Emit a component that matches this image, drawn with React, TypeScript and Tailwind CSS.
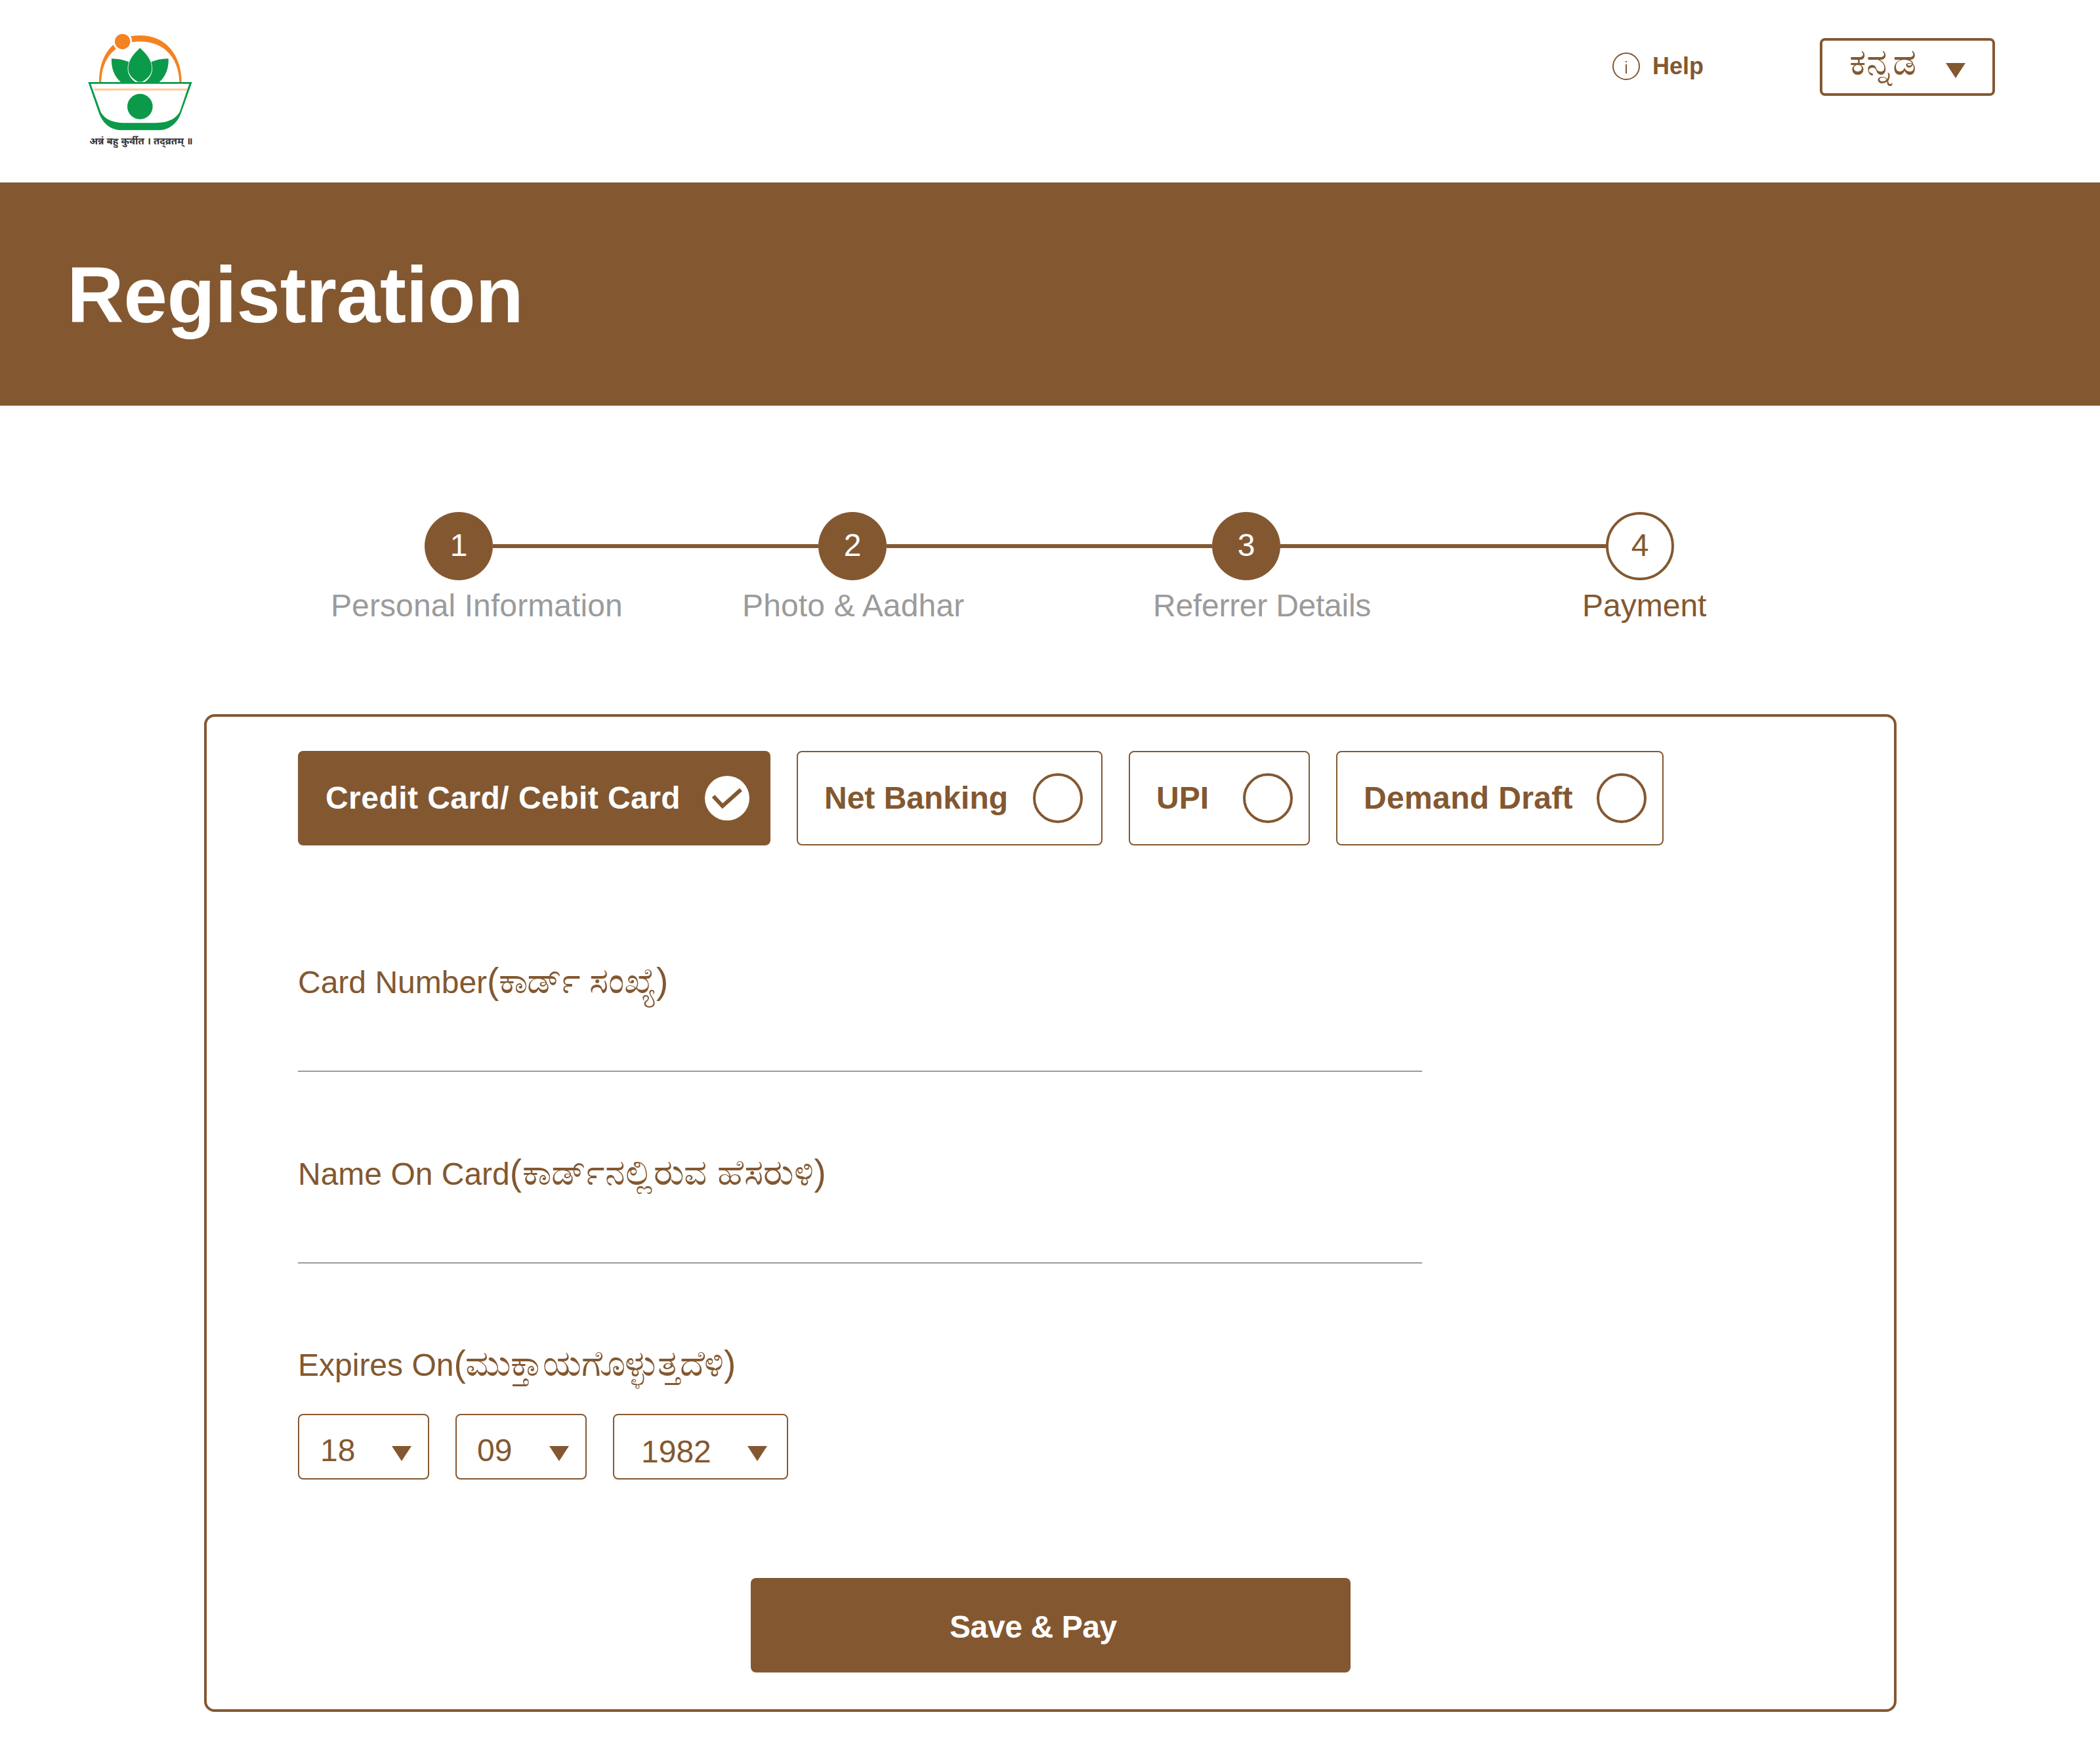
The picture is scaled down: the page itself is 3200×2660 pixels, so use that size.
import React from 'react';

const Caret: React.FC<{ className?: string }> = ({ className = '' }) => (
  <svg className={className} width="30" height="23" viewBox="0 0 30 23">
    <path d="M0 0h30L15 23z" fill="#835831" />
  </svg>
);

const Logo: React.FC = () => (
  <div className="flex flex-col items-center w-[170px]">
    <svg width="170" height="150" viewBox="90 60 510 450">
      <path d="M153 285C153 160 220 72 340 72C465 72 530 170 530 285H520C518 175 450 100 340 100C230 100 165 175 163 285Z" fill="#F58220" />
      <circle cx="260" cy="100" r="44" fill="#fff" />
      <circle cx="260" cy="100" r="35" fill="#F58220" />
      <path d="M210 178C240 178 270 184 296 196C278 225 280 255 318 285H252C222 260 208 220 210 178Z" fill="#0B9A4A" />
      <path d="M470 178C440 178 410 184 384 196C402 225 400 255 362 285H428C458 260 472 220 470 178Z" fill="#0B9A4A" />
      <path d="M340 128C300 165 285 190 285 225C285 250 305 270 330 285H350C375 270 395 250 395 225C395 190 380 165 340 128Z" fill="#0B9A4A" stroke="#DDEFE0" strokeWidth="3" />
      <path d="M103 285H578L530 420C510 480 470 505 420 505H260C210 505 170 480 150 420Z" fill="#0B9A4A" />
      <path d="M115 293H565L522 420C500 460 460 470 410 472H270C220 470 180 460 160 420Z" fill="#fff" />
      <path d="M128 314H556L553 324H132Z" fill="#FFCBA4" />
      <circle cx="340" cy="397" r="58" fill="#0B9A4A" />
    </svg>
    <span className="mt-[3px] text-[15px] leading-[24px] font-bold text-[#333] whitespace-nowrap">अन्नं बहु कुर्वीत । तद्व्रतम् ॥</span>
  </div>
);

const steps = [
  { n: 1, done: true },
  { n: 2, done: true },
  { n: 3, done: true },
  { n: 4, done: false },
];

const Stepper: React.FC = () => (
  <div className="pt-[162px]">
    <div className="ml-[647px] w-[1904px] flex items-center">
      {steps.map((s, i) => (
        <React.Fragment key={s.n}>
          {s.done ? (
            <div className="w-[104px] h-[104px] pb-[3px] rounded-full bg-[#835831] text-white text-[48px] flex items-center justify-center shrink-0">{s.n}</div>
          ) : (
            <div className="w-[104px] h-[104px] pb-[3px] rounded-full border-[4px] border-[#835831] text-[#835831] text-[48px] flex items-center justify-center shrink-0">{s.n}</div>
          )}
          {i < 3 && <div className="flex-1 h-[6px] bg-[#835831]" />}
        </React.Fragment>
      ))}
    </div>
    <div className="mt-[11px] flex text-[48px] leading-[56px] text-[#9b9b9b] whitespace-nowrap">
      <span className="ml-[504px] w-[443px] tracking-[0.1px]">Personal Information</span>
      <span className="ml-[184px] w-[339px] tracking-[0.15px]">Photo &amp; Aadhar</span>
      <span className="ml-[287px] w-[331px] tracking-[-0.25px]">Referrer Details</span>
      <span className="ml-[323px] text-[#835831]">Payment</span>
    </div>
  </div>
);

const Tab: React.FC<{ label: string; width: string; pr: string; tracking?: string }> = ({ label, width, pr, tracking = '' }) => (
  <div className={`${width} ${pr} h-[144px] border-2 border-[#835831] rounded-[8px] flex items-center justify-between pl-[40px] text-[48px] font-bold text-[#835831] whitespace-nowrap`}>
    <span className={tracking}>{label}</span>
    <span className="w-[76px] h-[76px] rounded-full border-[4px] border-[#835831] shrink-0" />
  </div>
);

const Kn: React.FC<{ tracking: string; children: React.ReactNode }> = ({ tracking, children }) => (
  <span className={`text-[55px] leading-none ${tracking}`}>{children}</span>
);

const Field: React.FC<{ children: React.ReactNode }> = ({ children }) => (
  <div className="w-[1713px]">
    <div className="h-[56px] text-[48px] leading-[56px] text-[#835831] whitespace-nowrap">{children}</div>
    <div className="h-[110px] border-b-2 border-[#9b9b9b]" />
  </div>
);

const Select: React.FC<{ value: string; width: string; pad: string; pr: string; drop: string }> = ({ value, width, pad, pr, drop }) => (
  <div className={`${width} ${pad} ${pr} h-[100px] border-2 border-[#835831] rounded-[8px] flex items-center justify-between text-[48px] text-[#835831]`}>
    <span className={drop}>{value}</span>
    <Caret className="mt-[21px]" />
  </div>
);

export default function App() {
  return (
    <div className="w-[3200px] h-[2660px] bg-white font-['Liberation_Sans','Noto_Sans',sans-serif] overflow-hidden">
      <header className="h-[278px] flex items-start justify-between pl-[130px] pr-[160px]">
        <div className="pt-[50px]">
          <Logo />
        </div>
        <div className="flex items-center pt-[58px]">
          <div className="flex items-center mb-[3px]">
            <svg width="42" height="42" viewBox="0 0 42 42" fill="none" stroke="#835831" strokeWidth="2">
              <circle cx="21" cy="21" r="20" />
              <path d="M21 13v2M21 18v14" />
            </svg>
            <span className="ml-[19px] text-[36px] font-bold text-[#835831]">Help</span>
          </div>
          <div className="ml-[177px] w-[267px] h-[88px] border-[4px] border-[#835831] rounded-[8px] flex items-center justify-between pl-[41px] pr-[41px] text-[57px] text-[#835831]">
            <span className="leading-none mb-[15px]">ಕನ್ನಡ</span>
            <Caret className="mt-[10px]" />
          </div>
        </div>
      </header>

      <div className="h-[340px] bg-[#835831] flex items-center pl-[102px] pt-[2px]">
        <h1 className="text-[120px] font-bold text-white leading-none tracking-[-0.4px]">Registration</h1>
      </div>

      <Stepper />

      <main className="mt-[137px] ml-[311px] w-[2579px] h-[1520px] border-[4px] border-[#835831] rounded-[16px] pt-[52px] pl-[139px]">
        <div className="flex gap-[40px]">
          <div className="w-[720px] h-[144px] bg-[#835831] rounded-[8px] flex items-center justify-between pl-[42px] pr-[32px] text-[48px] font-bold text-white whitespace-nowrap">
            <span className="tracking-[0.45px]">Credit Card/ Cebit Card</span>
            <span className="w-[68px] h-[68px] rounded-full bg-white flex items-center justify-center shrink-0">
              <svg width="46" height="32" viewBox="0 0 46 32" fill="none" stroke="#835831" strokeWidth="6">
                <path d="M2 13l14 15L44 3" />
              </svg>
            </span>
          </div>
          <Tab label="Net Banking" width="w-[466px]" pr="pr-[28px]" />
          <Tab label="UPI" width="w-[276px]" pr="pr-[24px]" />
          <Tab label="Demand Draft" width="w-[499px]" pr="pr-[24px]" tracking="tracking-[0.35px]" />
        </div>

        <div className="mt-[179px] flex flex-col gap-[126px]">
          <Field>Card Number<Kn tracking="tracking-[-0.6px]">(ಕಾರ್ಡ್ ಸಂಖ್ಯೆ)</Kn></Field>
          <Field>Name On Card<Kn tracking="tracking-[0.5px]">(ಕಾರ್ಡ್‌ನಲ್ಲಿರುವ ಹೆಸರುಳಿ)</Kn></Field>
        </div>

        <div className="mt-[125px] h-[56px] text-[48px] leading-[56px] text-[#835831] whitespace-nowrap">Expires On<Kn tracking="tracking-[-0.3px]">(ಮುಕ್ತಾಯಗೊಳ್ಳುತ್ತದೆಳಿ)</Kn></div>
        <div className="mt-[48px] flex gap-[40px]">
          <Select value="18" width="w-[200px]" pad="pl-[32px]" pr="pr-[25px]" drop="mt-[12px]" />
          <Select value="09" width="w-[200px]" pad="pl-[31px]" pr="pr-[25px]" drop="mt-[12px]" />
          <Select value="1982" width="w-[267px]" pad="pl-[41px]" pr="pr-[30px]" drop="mt-[16px]" />
        </div>

        <div className="mt-[150px] ml-[690px] w-[914px] h-[144px] bg-[#835831] rounded-[8px] flex items-center pl-[303px] pt-[6px] text-[48px] font-bold text-white tracking-[-0.4px]">
          Save &amp; Pay
        </div>
      </main>
    </div>
  );
}
